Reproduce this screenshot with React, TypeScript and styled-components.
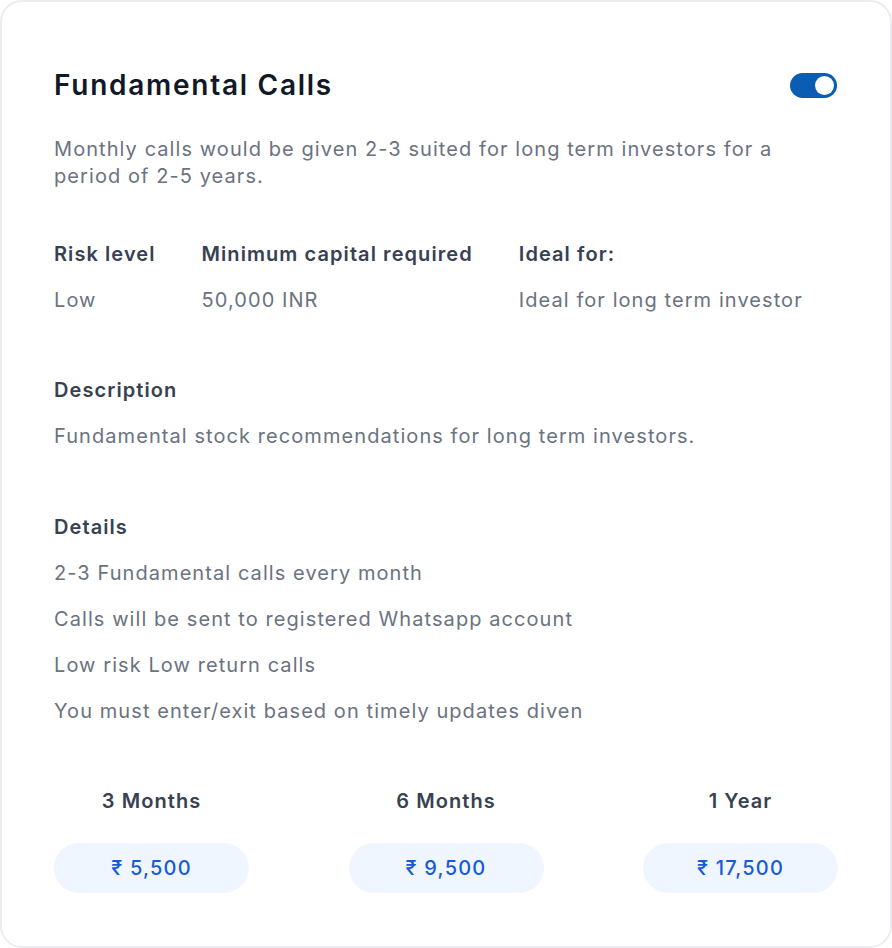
import React from "react";
import styled, { createGlobalStyle } from "styled-components";

const GlobalStyle = createGlobalStyle`
    * {
        box-sizing: border-box;
    }
    body {
        margin: 0;
        background: #ffffff;
        font-family: Inter, "Noto Sans", "Liberation Sans", sans-serif;
        letter-spacing: 0.067em;
    }
`;

const Card = styled.section`
    width: 892px;
    height: 948px;
    border: 2px solid #ececf1;
    border-radius: 22px;
    background: #ffffff;
    padding: 65px 52px 52px;
    display: flex;
    flex-direction: column;
`;

const Header = styled.div`
    display: flex;
    justify-content: space-between;
    align-items: center;
`;

const Title = styled.h1`
    margin: 0;
    font-size: 28px;
    line-height: 36px;
    font-weight: 600;
    letter-spacing: 0.062em;
    color: #111827;
`;

const Toggle = styled.button<{ $on: boolean }>`
    width: 47px;
    height: 25px;
    border: none;
    padding: 3px;
    border-radius: 999px;
    background: ${(p) => (p.$on ? "#0a5db3" : "#d1d5db")};
    display: flex;
    justify-content: ${(p) => (p.$on ? "flex-end" : "flex-start")};
    cursor: pointer;
    margin-right: 1px;

    &::after {
        content: "";
        width: 19px;
        height: 19px;
        border-radius: 50%;
        background: #ffffff;
    }
`;

const Summary = styled.p`
    margin: 33px 0 0;
    max-width: 780px;
    font-size: 20px;
    line-height: 27px;
    color: #6b7280;
`;

const Section = styled.div<{ $top: number }>`
    margin-top: ${(p) => p.$top}px;
    display: flex;
    flex-direction: column;
    gap: 18px;
`;

const InfoGrid = styled.div`
    display: grid;
    grid-template-columns: auto auto 1fr;
    column-gap: 46px;
    row-gap: 18px;
`;

const Label = styled.div`
    font-size: 20px;
    line-height: 28px;
    font-weight: 600;
    color: #374151;
`;

const Text = styled.div`
    font-size: 20px;
    line-height: 28px;
    color: #6b7280;
`;

const Plans = styled.div`
    margin-top: 62px;
    display: grid;
    grid-template-columns: repeat(3, 195px);
    justify-content: space-between;
`;

const Plan = styled.div`
    display: flex;
    flex-direction: column;
    align-items: center;
    gap: 28px;
`;

const Price = styled.button`
    width: 195px;
    height: 50px;
    border: none;
    border-radius: 999px;
    background: #eff6ff;
    color: #1a5ad6;
    font-family: inherit;
    font-size: 20px;
    font-weight: 500;
    letter-spacing: 0.06em;
    cursor: pointer;
`;

const details = [
    "2-3 Fundamental calls every month",
    "Calls will be sent to registered Whatsapp account",
    "Low risk Low return calls",
    "You must enter/exit based on timely updates diven",
];

const plans = [
    { period: "3 Months", price: "₹ 5,500" },
    { period: "6 Months", price: "₹ 9,500" },
    { period: "1 Year", price: "₹ 17,500" },
];

export default function App() {
    return (
        <>
            <GlobalStyle />
            <Card>
                <Header>
                    <Title>Fundamental Calls</Title>
                    <Toggle $on aria-label="Toggle plan" />
                </Header>
                <Summary>
                    Monthly calls would be given 2-3 suited for long term investors for a period of
                    2-5 years.
                </Summary>

                <Section $top={50}>
                    <InfoGrid>
                        <Label>Risk level</Label>
                        <Label>Minimum capital required</Label>
                        <Label>Ideal for:</Label>
                        <Text>Low</Text>
                        <Text>50,000 INR</Text>
                        <Text>Ideal for long term investor</Text>
                    </InfoGrid>
                </Section>

                <Section $top={62}>
                    <Label>Description</Label>
                    <Text>Fundamental stock recommendations for long term investors.</Text>
                </Section>

                <Section $top={63}>
                    <Label>Details</Label>
                    {details.map((d) => (
                        <Text key={d}>{d}</Text>
                    ))}
                </Section>

                <Plans>
                    {plans.map((p) => (
                        <Plan key={p.period}>
                            <Label>{p.period}</Label>
                            <Price>{p.price}</Price>
                        </Plan>
                    ))}
                </Plans>
            </Card>
        </>
    );
}
